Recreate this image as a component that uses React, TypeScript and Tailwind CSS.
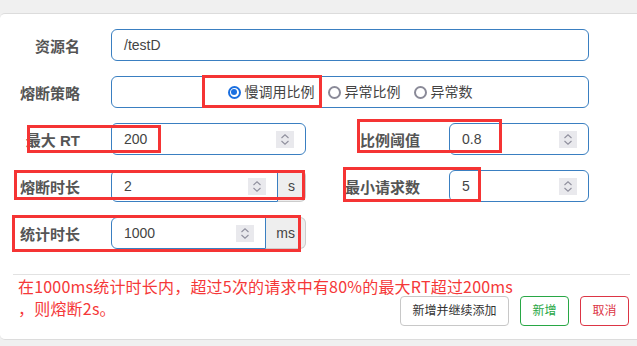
import React from "react";

const FONT = { fontFamily: '"Liberation Sans", "Noto Sans CJK SC", sans-serif' };

function Spinner() {
  return (
    <svg width="18" height="17" viewBox="0 0 18 17" className="shrink-0">
      <rect x="0" y="0" width="18" height="17" fill="#e9e9ed" />
      <path d="M5.5 7 L9 3.8 L12.5 7" fill="none" stroke="#8f8f9d" strokeWidth="1.1" />
      <path d="M5.5 10 L9 13.2 L12.5 10" fill="none" stroke="#8f8f9d" strokeWidth="1.1" />
    </svg>
  );
}

function Label({ children, className = "" }: { children: React.ReactNode; className?: string }) {
  return (
    <div className={"text-right text-[15px] font-bold text-[#555] pt-[4px] leading-[28px] " + className}>
      {children}
    </div>
  );
}

function NumInput({ value, w, addon }: { value: string; w: string; addon?: string }) {
  return (
    <div className={"flex h-[32px] " + w}>
      <div
        className={
          "flex-1 flex items-center justify-between border border-[#3a7fc1] bg-white pl-[12px] pr-[11px] text-[14px] text-[#444] " +
          (addon ? "rounded-l-[6px]" : "rounded-[6px]")
        }
      >
        <span>{value}</span>
        <Spinner />
      </div>
      {addon && (
        <div className="flex items-center justify-center border border-l-0 border-[#ccc] bg-[#eeeeee] rounded-r-[6px] text-[14px] text-[#444] px-[10px]">
          {addon}
        </div>
      )}
    </div>
  );
}

function Radio({ checked, label }: { checked?: boolean; label: string }) {
  return (
    <div className="flex items-center gap-[4px]">
      {checked ? (
        <span className="w-[13px] h-[13px] rounded-full border-[2px] border-[#1a6fe0] flex items-center justify-center">
          <span className="w-[6px] h-[6px] rounded-full bg-[#1a6fe0]" />
        </span>
      ) : (
        <span className="w-[13px] h-[13px] rounded-full border-[2px] border-[#8a8a98]" />
      )}
      <span className="text-[14px] text-[#444]">{label}</span>
    </div>
  );
}

function RedBox({ cls }: { cls: string }) {
  return <div className={"absolute border-[3px] border-[#f53434] pointer-events-none " + cls} />;
}

export default function App() {
  return (
    <div className="relative w-[637px] h-[346px] overflow-hidden bg-[#f0f0f0] pt-[13px]" style={FONT}>
      <div className="h-[327px] bg-white border-t border-b border-[#dcdcdc] rounded-l-[5px] pt-[15px]">
        <div className="flex flex-col gap-[15px]">
          {/* Row 1 */}
          <div className="flex h-[32px]">
            <Label className="w-[80px]">资源名</Label>
            <div className="ml-[31px] w-[478px] h-[32px] border border-[#3a7fc1] rounded-[6px] flex items-center pl-[12px] text-[14px] text-[#444]">
              /testD
            </div>
          </div>
          {/* Row 2 */}
          <div className="flex h-[32px]">
            <Label className="w-[80px]">熔断策略</Label>
            <div className="ml-[31px] w-[478px] h-[32px] border border-[#3a7fc1] rounded-[6px] flex items-center justify-center gap-[13px]">
              <Radio checked label="慢调用比例" />
              <Radio label="异常比例" />
              <Radio label="异常数" />
            </div>
          </div>
          {/* Row 3 */}
          <div className="flex h-[32px]">
            <Label className="w-[80px]">最大 RT</Label>
            <div className="ml-[31px]">
              <NumInput value="200" w="w-[195px]" />
            </div>
            <Label className="w-[114px]">比例阈值</Label>
            <div className="ml-[29px]">
              <NumInput value="0.8" w="w-[140px]" />
            </div>
          </div>
          {/* Row 4 */}
          <div className="flex h-[32px]">
            <Label className="w-[80px]">熔断时长</Label>
            <div className="ml-[31px]">
              <NumInput value="2" w="w-[195px]" addon="s" />
            </div>
            <Label className="w-[114px]">最小请求数</Label>
            <div className="ml-[29px]">
              <NumInput value="5" w="w-[140px]" />
            </div>
          </div>
          {/* Row 5 */}
          <div className="flex h-[32px]">
            <Label className="w-[80px]">统计时长</Label>
            <div className="ml-[31px]">
              <NumInput value="1000" w="w-[195px]" addon="ms" />
            </div>
          </div>
        </div>

        {/* Footer */}
        <div className="mt-[25px] ml-[13px] mr-[7px] border-t border-[#e2e2e2] grid">
          <div
            className="col-start-1 row-start-1 pl-[5px] text-[16px] leading-[22px] tracking-[0.2px] text-[#f53838]"
            style={{ fontFamily: '"Noto Sans CJK SC", sans-serif' }}
          >
            在1000ms统计时长内，超过5次的请求中有80%的最大RT超过200ms
            <br />
            ，则熔断2s。
          </div>
          <div className="col-start-1 row-start-1 justify-self-end self-start mt-[21px] mr-[1px] flex gap-[11px]">
            <button className="h-[30px] w-[109px] border border-[#c8c8c8] rounded-[4px] bg-white text-[12px] text-[#333]">
              新增并继续添加
            </button>
            <button className="h-[30px] w-[49px] border border-[#28a745] rounded-[4px] bg-white text-[12px] text-[#28a745]">
              新增
            </button>
            <button className="h-[30px] w-[49px] border border-[#dc3545] rounded-[4px] bg-white text-[12px] text-[#dc3545]">
              取消
            </button>
          </div>
        </div>
      </div>

      <RedBox cls="left-[202px] top-[75px] w-[120px] h-[33px]" />
      <RedBox cls="left-[27px] top-[125px] w-[134px] h-[28px]" />
      <RedBox cls="left-[357px] top-[119px] w-[145px] h-[34px]" />
      <RedBox cls="left-[14px] top-[170px] w-[291px] h-[30px]" />
      <RedBox cls="left-[343px] top-[167px] w-[138px] h-[35px]" />
      <RedBox cls="left-[12px] top-[215px] w-[289px] h-[37px]" />
    </div>
  );
}
